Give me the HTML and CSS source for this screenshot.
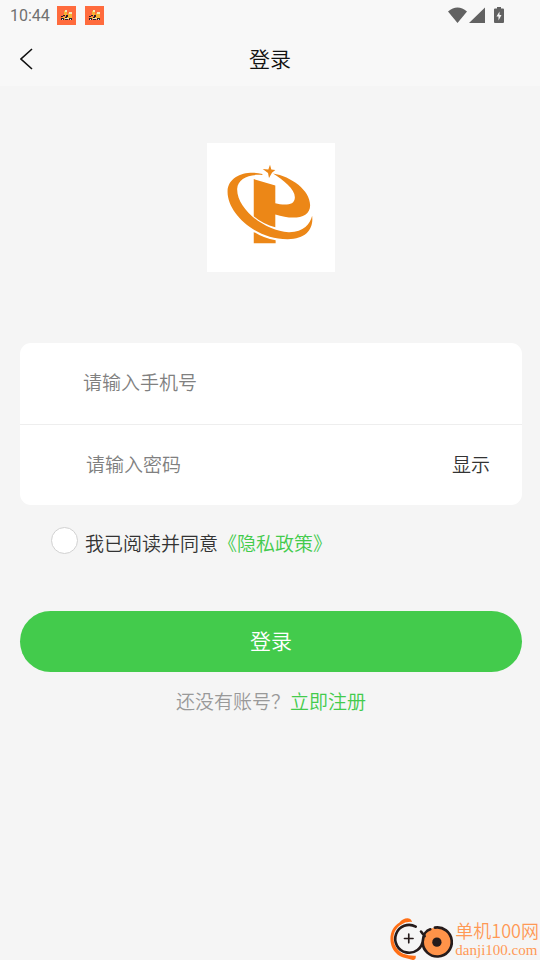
FILE: index.html
```html
<!DOCTYPE html>
<html lang="zh-CN">
<head>
<meta charset="utf-8">
<meta name="viewport" content="width=device-width, initial-scale=1">
<title>登录</title>
<link rel="stylesheet" href="styles.css">
</head>
<body>
<svg class="defs" aria-hidden="true">
  <symbol id="scooter" viewBox="0 0 19 19">
    <path fill="#ff6b3d" d="M0 0h19v19H0z"/>
    <path fill="#f6b335" d="M7 5h3v5H7zM11 7h4v4h-4zM5 11h5v2H5zM10 11h5v2h-5z"/>
    <path fill="#f3e6b8" d="M8 4h2v2H8zM12 6h3v2h-3zM8 12h4v1H8z"/>
    <path fill="#26202c" d="M6 9h2v1H6zM4 10h2v1H4zM9 9h2v2H9zM8 11h2v1H8zM4 12h3v2H4zM12 12h3v2h-3zM8 13h3v1H8z"/>
    <path fill="#e8e0cd" d="M5 13h1v1H5zM13 13h1v1h-1z"/>
  </symbol>
</svg>
<header class="top">
  <div class="status">
    <span class="time">10:44</span>
    <svg class="app"><use href="#scooter"/></svg>
    <svg class="app"><use href="#scooter"/></svg>
    <svg class="signals" viewBox="0 0 58 18" aria-hidden="true">
      <path fill="#626262" d="M0 4.500Q9.500-3.500 19 4.500L9.500 16zM37 .500V16H21zM48 1.500h1V0h4v1.500h2q1 0 1 1V15q0 1-1 1h-8q-1 0-1-1V2.500q0-1 1-1z"/>
      <path fill="#f7f7f7" d="M51.500 4.500L48.500 9.500h2v4l3-5.500h-2z"/>
    </svg>
  </div>
  <nav class="nav">
    <a class="back" href="#" aria-label="返回"><svg viewBox="0 0 14 22"><path d="M12 1L1 11l11 10" fill="none" stroke="#111" stroke-width="1.600"/></svg></a>
    <h1 class="title">登录</h1>
  </nav>
</header>
<main class="main">
  <svg class="logo" viewBox="21 21 386 386" preserveAspectRatio="none" role="img" aria-label="标志">
    <path fill="#fff" d="M21 21h386v386H21z"/>
    <g fill="#ec8717">
      <path d="M188 114C145 102 84 117 83 166C82 232 168 310 265 309C320 308 343 278 338 239C332 264 312 289 267 288C196 285 110 218 112 158C114 128 147 113 188 117z"/>
      <path d="M162 129L227 148V201C249 207 286 211 286 183C286 158 251 132 220 112C275 121 332 162 332 207C332 247 281 252 227 235V273C203 267 180 255 162 240z"/>
      <path d="M162 287Q192 306 228 312V321H162z"/>
      <path d="M211 86L215 100L227 102L217 110L208 126L205 111L189 99L206 100z"/>
    </g>
  </svg>
  <form class="form">
    <div class="card">
      <div class="row"><input class="field phone" type="tel" placeholder="请输入手机号" aria-label="手机号"></div>
      <div class="row"><input class="field password" type="password" placeholder="请输入密码" aria-label="密码"><button class="show" type="button">显示</button></div>
    </div>
    <div class="agree">
      <input class="check" id="agree" type="checkbox">
      <div class="terms"><label for="agree">我已阅读并同意</label><a class="link" href="#">《隐私政策》</a></div>
    </div>
    <button class="submit" type="submit">登录</button>
    <p class="signup">还没有账号？<a class="link" href="#">立即注册</a></p>
  </form>
</main>
<aside class="mark">
  <svg class="mark-icon" viewBox="30 20 195 130" aria-hidden="true">
    <path fill="#ff6f16" d="M99 35C94 17 70 24 61 37C26 57 25 110 55 133C70 145 88 144 101 150Q112 151 110 137Q91 138 72 131C39 114 31 67 63 45Q80 33 99 35z"/>
    <circle cx="174" cy="96" r="44" fill="#ff9349"/>
    <g fill="none" stroke="#251b1b" stroke-width="8" stroke-linecap="round">
      <path d="M110 49A42 42 0 1 0 132 89C133 73 142 60 154 57M126 64L137 78M168 52A44 44 0 1 1 131 96"/>
      <path stroke-width="5" d="M76 85h26M89 72v26"/>
    </g>
    <circle cx="174" cy="96" r="14" fill="#251b1b"/>
  </svg>
  <div class="mark-text"><span class="mark-name">单机100网</span><span class="mark-site">danji100.com</span></div>
</aside>
</body>
</html>
```
FILE: styles.css
```css
* { box-sizing: border-box; }
body {
  position: relative;
  min-height: 100vh;
  margin: 0;
  background: #f5f5f5;
  color: #333;
  font: 350 19px/28px "Noto Sans CJK SC DemiLight", "Noto Sans CJK SC", sans-serif;
}
a { text-decoration: none; }
button, input { font: inherit; }
button { border: 0; padding: 0; cursor: pointer; }
.defs { position: absolute; width: 0; height: 0; }
.top { background: #f8f8f8; }
.status {
  display: flex;
  align-items: center;
  gap: 8px;
  height: 31px;
  padding: 0 34px 0 10px;
}
.time { margin-right: -1px; color: #707070; font: 400 16px/20px Roboto, sans-serif; }
.app { width: 19px; height: 19px; }
.app + .app { margin-left: 1px; }
.signals { width: 58px; height: 18px; margin-left: auto; }
.nav {
  display: grid;
  grid-template-columns: 1fr auto 1fr;
  align-items: center;
  height: 55px;
  padding: 0 20px;
}
.back { display: flex; }
.back svg { width: 14px; height: 22px; }
.title { margin: 0; padding-bottom: 2px; color: #111; font-size: 21px; font-weight: 350; line-height: 30px; }
.main { padding: 57px 18px 0 20px; }
.logo { display: block; width: 128px; height: 129px; margin: 0 auto 71px; }
.card { overflow: hidden; border-radius: 11px; background: #fff; }
.row { display: flex; align-items: center; height: 81px; padding: 0 32px 3px 0; }
.row + .row { border-top: 1px solid #eee; }
.field {
  flex: 1;
  min-width: 0;
  border: 0;
  outline: 0;
  background: none;
  color: #333;
}
.field::placeholder { color: #808080; }
.phone { padding: 0 0 0 63px; }
.password { padding: 0 0 0 66px; }
.show { background: none; color: #333; }
.agree { display: flex; align-items: flex-start; gap: 7px; padding: 22px 31px 0; }
.check {
  appearance: none;
  width: 27px;
  height: 27px;
  margin: 0;
  border: 1px solid #d1d1d1;
  border-radius: 50%;
  background: #fff;
}
.check:checked { background: #43cb4c; }
.terms { padding-top: 2px; }
.link { color: #43cb4c; }
.submit {
  display: block;
  width: 100%;
  height: 61px;
  margin-top: 54px;
  padding-bottom: 3px;
  border-radius: 31px;
  background: #43cb4c;
  color: #fff;
  font-size: 21px;
}
.signup { margin: 15px 0 0; color: #999; text-align: center; }
.mark { position: absolute; right: 1px; bottom: 0; display: flex; align-items: flex-end; gap: 1px; }
.mark-icon { width: 65px; height: 43px; }
.mark-text { display: flex; flex-direction: column; color: #ff9955; }
.mark-name { font-size: 18px; line-height: 20px; }
.mark-site { font: 15px/20px "Liberation Serif", serif; }
```
